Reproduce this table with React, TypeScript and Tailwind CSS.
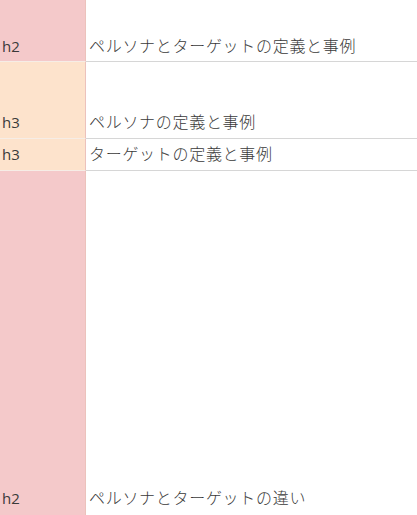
import React from "react";

const rows = [
  { tag: "h2", text: "ペルソナとターゲットの定義と事例", h: "h-[62px]", left: "bg-[#f4c9ca]", pb: "pb-[4px]" },
  { tag: "h3", text: "ペルソナの定義と事例", h: "h-[77px]", left: "bg-[#fde3cc]", pb: "pb-[5px]" },
  { tag: "h3", text: "ターゲットの定義と事例", h: "h-[32px]", left: "bg-[#fde3cc]", pb: "pb-[5px]" },
  { tag: "h2", text: "ペルソナとターゲットの違い", h: "h-[348px]", left: "bg-[#f4c9ca]", pb: "pb-[9px]" },
];

export default function App() {
  return (
    <div
      className="w-[417px] h-[515px] overflow-hidden bg-white text-[#3a3a3a]"
      style={{ fontFamily: '"Open Sans", "Noto Sans CJK JP", sans-serif' }}
    >
      {rows.map((r, i) => (
        <div key={i} className={`flex ${r.h}`}>
          <div
            className={`w-[86px] shrink-0 ${r.left} border-r border-r-[#ecc2bc] border-b border-b-[#f6ede6] flex items-end pl-[2px] ${r.pb} text-[15px] leading-[22px]`}
          >
            {r.tag}
          </div>
          <div
            className={`flex-1 border-b border-b-[#d6d6d6] flex items-end pl-[3px] ${r.pb} text-[16px] leading-[22px] tracking-[0.7px] font-light`}
          >
            {r.text}
          </div>
        </div>
      ))}
    </div>
  );
}
